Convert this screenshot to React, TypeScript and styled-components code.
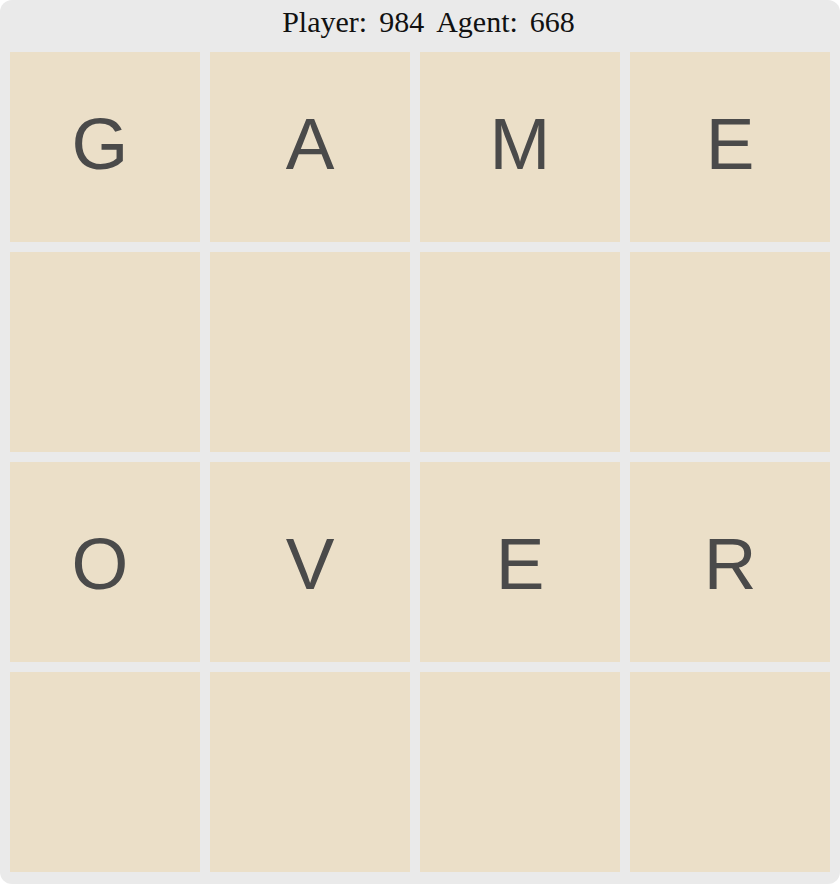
import React from "react";
import styled, { createGlobalStyle } from "styled-components";

const Global = createGlobalStyle`
  html, body { margin: 0; padding: 0; background: #ffffff; }
`;

const Board = styled.div`
  width: 840px;
  height: 884px;
  box-sizing: border-box;
  background: #eaeaea;
  border-radius: 12px;
  display: flex;
  flex-direction: column;
  padding: 0 10px 12px;
`;

const Header = styled.div`
  height: 52px;
  display: flex;
  align-items: center;
  justify-content: center;
  gap: 12px;
  font-family: "Liberation Serif", "Times New Roman", serif;
  font-size: 30px;
  color: #111;
  padding-bottom: 8px;
  padding-left: 17px;
  box-sizing: border-box;
`;

const Grid = styled.div`
  display: grid;
  grid-template-columns: 190px repeat(3, 200px);
  grid-template-rows: 190px repeat(3, 200px);
  gap: 10px;
`;

const Tile = styled.div<{ $firstCol: boolean; $firstRow: boolean }>`
  background: #ebdfc8;
  display: flex;
  align-items: center;
  justify-content: center;
  font-family: "Liberation Sans", Arial, sans-serif;
  font-size: 73px;
  color: #4a4a4a;
  padding-right: ${(p) => (p.$firstCol ? "10px" : "0")};
  padding-bottom: ${(p) => (p.$firstRow ? "10px" : "0")};
  padding-top: 3px;
  box-sizing: border-box;
`;

const letters = ["G", "A", "M", "E", "", "", "", "", "O", "V", "E", "R", "", "", "", ""];

export default function App() {
  return (
    <>
      <Global />
      <Board>
        <Header>
          <span>Player:</span>
          <span>984</span>
          <span>Agent:</span>
          <span>668</span>
        </Header>
        <Grid>
          {letters.map((l, i) => (
            <Tile key={i} $firstCol={i % 4 === 0} $firstRow={i < 4}>
              {l}
            </Tile>
          ))}
        </Grid>
      </Board>
    </>
  );
}
